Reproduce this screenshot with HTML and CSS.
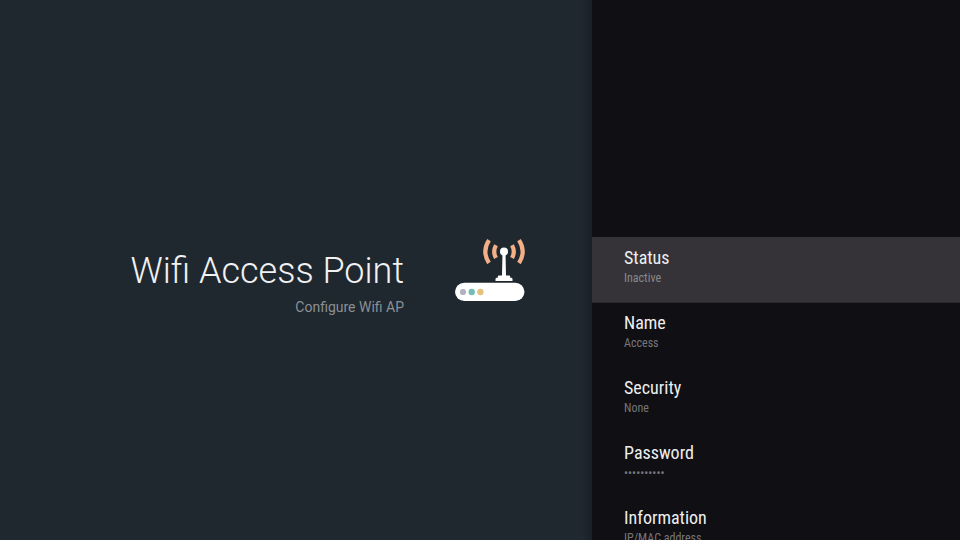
FILE: index.html
```html
<!DOCTYPE html>
<html lang="en">
<head>
<meta charset="utf-8">
<title>Wifi Access Point</title>
<link rel="stylesheet" href="styles.css">
</head>
<body>
<main class="screen">
  <section class="guidance">
    <div class="heading">
      <h1 class="title">Wifi Access Point</h1>
      <p class="description">Configure Wifi AP</p>
    </div>
    <svg class="router" width="70" height="64" viewBox="0 0 70 64" aria-hidden="true">
      <rect x="0" y="44.700" width="69.500" height="18.300" rx="9.150" fill="#fff"/>
      <circle cx="8" cy="54" r="3.100" fill="#b0b3bd"/>
      <circle cx="16.700" cy="54" r="3.200" fill="#75bdb3"/>
      <circle cx="25.400" cy="54" r="3.200" fill="#e3c27e"/>
      <path d="M47.500 14h3l.5 23.500h3.200q1 0 1 1v1.300h1q1.300 0 1.300 1.300v1.900h-17v-1.900q0-1.300 1.300-1.300h1v-1.300q0-1 1-1H47z" fill="#fff"/>
      <circle cx="49" cy="13.500" r="4" fill="#fff"/>
      <g fill="none" stroke="#f3b087" stroke-width="4.200">
        <path d="M41 7.200q-3.600 6.300 0 12.800"/>
        <path d="M57 7.200q3.600 6.300 0 12.800"/>
        <path d="M34 2.200q-7.400 11.400 0 22.800"/>
        <path d="M64 2.200q7.400 11.400 0 22.800"/>
      </g>
    </svg>
  </section>
  <section class="actions">
    <div class="action focused"><h2 class="label">Status</h2><p class="detail">Inactive</p></div>
    <div class="action"><h2 class="label">Name</h2><p class="detail">Access</p></div>
    <div class="action"><h2 class="label">Security</h2><p class="detail">None</p></div>
    <div class="action"><h2 class="label">Password</h2><p class="detail">••••••••••</p></div>
    <div class="action"><h2 class="label">Information</h2><p class="detail">IP/MAC address</p></div>
  </section>
</main>
</body>
</html>
```

FILE: styles.css
```css
* { box-sizing: border-box; }

body {
  margin: 0;
  overflow: hidden;
  font-family: Roboto, sans-serif;
}

h1, h2, p { margin: 0; font-weight: 400; }

.screen {
  display: flex;
  width: 960px;
  height: 540px;
  overflow: hidden;
  background: #1f272f;
}

.guidance {
  display: flex;
  justify-content: flex-end;
  align-items: flex-start;
  gap: 51px;
  width: 592px;
  padding: 238px 67px 0 0;
  background: linear-gradient(to right, transparent 582px, #192029 592px);
}

.heading {
  padding-top: 11px;
  text-align: right;
  white-space: nowrap;
}

.title {
  font-size: 36px;
  font-weight: 300;
  line-height: 44px;
  color: #f1f1f2;
}

.description {
  margin-top: 4px;
  font-size: 14px;
  line-height: 20px;
  color: #8b9096;
}

.router { flex: none; }

.actions {
  width: 368px;
  padding-top: 237px;
  background: #100f13;
  font-family: "Roboto Condensed", Roboto, sans-serif;
  font-stretch: 75%;
}

.action {
  height: 65px;
  padding: 10px 32px 0;
}

.focused {
  background: #353337;
  box-shadow: 0 1px #29282b;
}

.label {
  font-size: 18px;
  line-height: 22px;
  color: #eee;
}

.detail {
  font-size: 12px;
  line-height: 18px;
  color: #77767a;
}

.focused .detail { color: #89888b; }
```
